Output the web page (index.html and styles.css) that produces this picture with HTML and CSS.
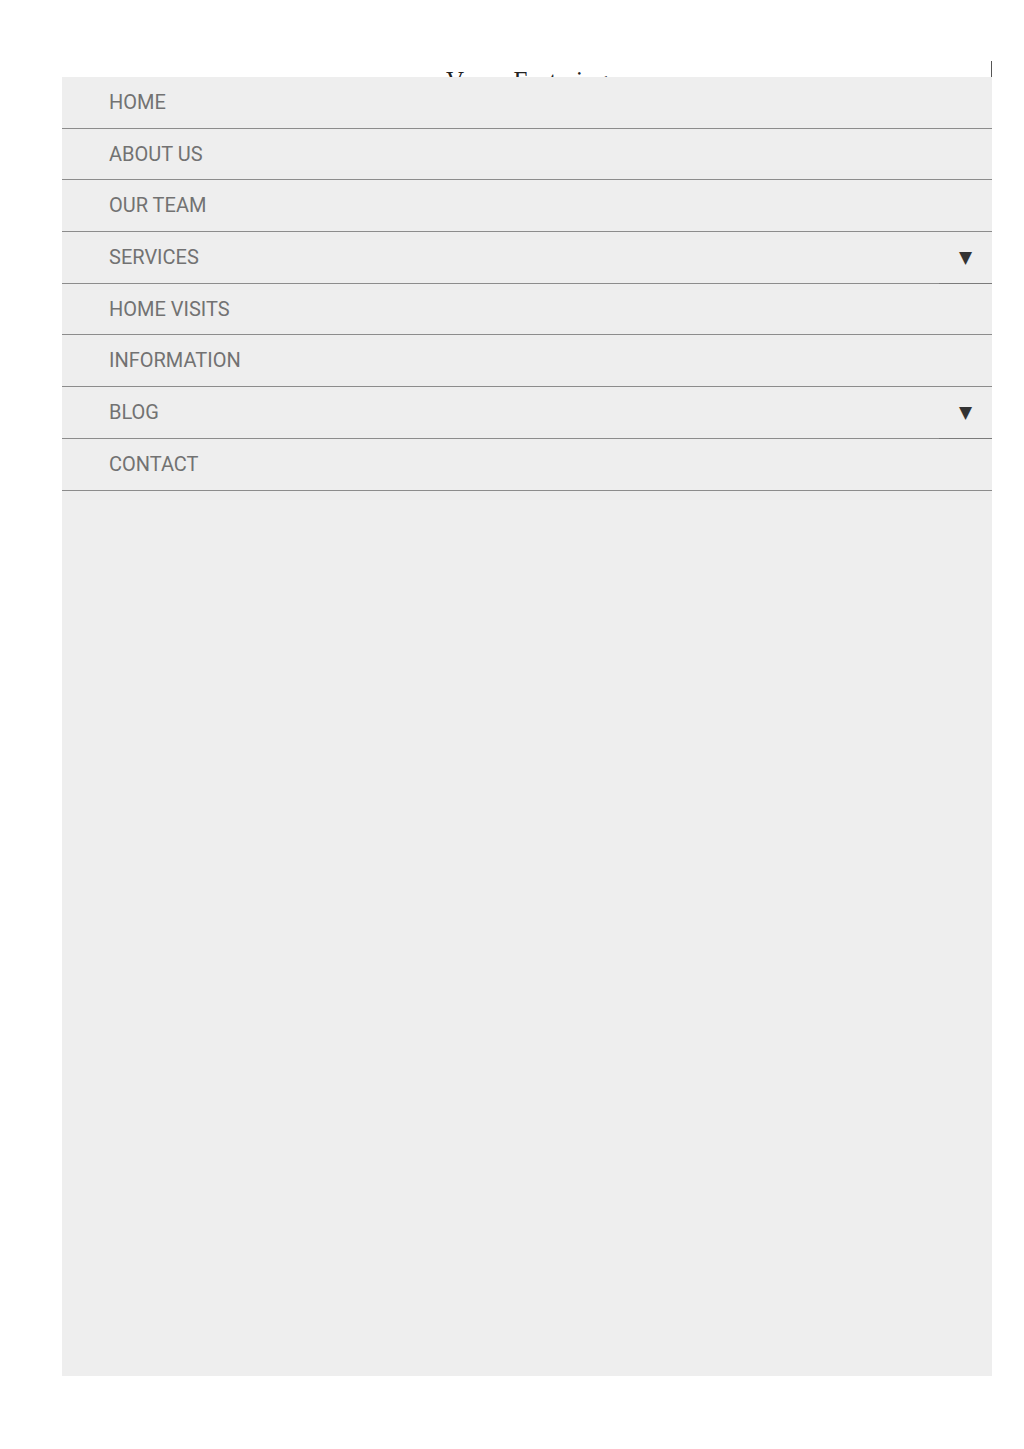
FILE: index.html
```html
<!DOCTYPE html>
<html lang="en">
<head>
  <meta charset="UTF-8" />
  <meta name="viewport" content="width=device-width, initial-scale=1.0"/>
  <title>Vance Fostering</title>
  <link rel="stylesheet" href="styles.css">
</head>
<body>
  <header class="site-header">
    <h1 class="site-title">Vance Fostering</h1>
    <span class="menu-edge"></span>
  </header>

  <nav class="mobile-nav">
    <ul class="nav-list">
      <li class="nav-item"><a href="#">HOME</a></li>
      <li class="nav-item"><a href="#">ABOUT US</a></li>
      <li class="nav-item"><a href="#">OUR TEAM</a></li>
      <li class="nav-item has-sub"><a href="#">SERVICES</a><span class="sub-toggle">&#9660;</span></li>
      <li class="nav-item"><a href="#">HOME VISITS</a></li>
      <li class="nav-item"><a href="#">INFORMATION</a></li>
      <li class="nav-item has-sub"><a href="#">BLOG</a><span class="sub-toggle">&#9660;</span></li>
      <li class="nav-item"><a href="#">CONTACT</a></li>
    </ul>
  </nav>
</body>
</html>
```

FILE: styles.css
```css
body {
  margin: 0;
  background-color: #ffffff;
  font-family: "Liberation Serif", serif;
}

.site-header {
  position: relative;
  height: 77px;
  padding: 0 32px 0 62px;
}

.site-title {
  margin: 0;
  padding-top: 66px;
  text-align: center;
  font-size: 25px;
  font-weight: normal;
  line-height: 30px;
  color: #222;
}

.menu-edge {
  position: absolute;
  top: 61px;
  right: 32px;
  width: 1px;
  height: 16px;
  background-color: #555;
}

.mobile-nav {
  position: absolute;
  top: 77px;
  left: 62px;
  width: 930px;
  height: 1299px;
  background-color: #eeeeee;
}

.nav-list {
  list-style: none;
  margin: 0;
  padding: 0;
}

.nav-item {
  display: flex;
  align-items: stretch;
  height: 51.7px;
}

.nav-item a {
  flex: 1;
  display: flex;
  align-items: center;
  padding: 0 0 1px 47px;
  font-family: Roboto, "Liberation Sans", sans-serif;
  font-size: 20px;
  line-height: 28px;
  color: #727272;
  text-decoration: none;
  border-bottom: 1px solid #8c8c8c;
}

.sub-toggle {
  width: 53px;
  display: flex;
  align-items: center;
  justify-content: center;
  font-family: "DejaVu Sans", sans-serif;
  font-size: 17px;
  color: #333;
  border-bottom: 1px solid #7a7a7a;
}
```
